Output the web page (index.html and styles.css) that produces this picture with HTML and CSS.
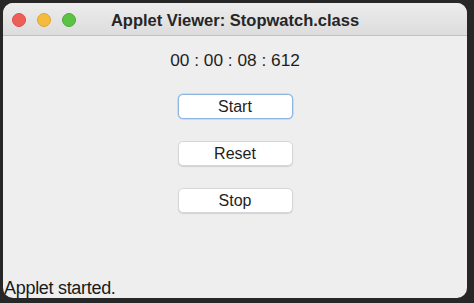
FILE: index.html
```html
<!DOCTYPE html>
<html>
<head>
<meta charset="utf-8">
<link rel="stylesheet" href="styles.css">
</head>
<body>
<div class="window">
  <div class="titlebar">
    <div class="lights">
      <span class="light red"></span>
      <span class="light yellow"></span>
      <span class="light green"></span>
    </div>
    <div class="title">Applet Viewer: Stopwatch.class</div>
  </div>
  <div class="content">
    <div class="time">00 : 00 : 08 : 612</div>
    <div class="buttons">
      <button class="btn focus">Start</button>
      <button class="btn">Reset</button>
      <button class="btn">Stop</button>
    </div>
    <div class="status">Applet started.</div>
  </div>
</div>
</body>
</html>
```
FILE: styles.css
```css
html, body {
  margin: 0;
  padding: 0;
  background: #272727;
  width: 474px;
  height: 303px;
  overflow: hidden;
}
.window {
  margin: 3px 0 0 3px;
  width: 464px;
  height: 295px;
  border-radius: 10px;
  overflow: hidden;
  background: #eeeeee;
  display: flex;
  flex-direction: column;
  font-family: "Liberation Sans", Arial, sans-serif;
}
.titlebar {
  height: 32px;
  flex: none;
  background: linear-gradient(#ececec, #dcdcdc);
  border-bottom: 1px solid #c2c2c2;
  display: flex;
  align-items: center;
  position: relative;
}
.lights {
  display: flex;
  gap: 11px;
  padding-left: 9px;
  padding-top: 1px;
}
.light {
  box-sizing: border-box;
  width: 14px;
  height: 14px;
  border-radius: 50%;
  display: block;
}
.red { background: #ee5e57; border: 0.5px solid #d8504a; }
.yellow { background: #f5bb3c; border: 0.5px solid #dea435; }
.green { background: #5ac343; border: 0.5px solid #4cab39; }
.title {
  position: absolute;
  left: 0;
  right: 0;
  top: 8px;
  text-align: center;
  font-weight: bold;
  font-size: 16.5px;
  color: #262626;
}
.content {
  flex: 1;
  display: flex;
  flex-direction: column;
  align-items: center;
}
.time {
  margin-top: 14px;
  font-size: 17.3px;
  line-height: 20px;
  color: #1e1e1e;
}
.buttons {
  margin-top: 24px;
  display: flex;
  flex-direction: column;
  gap: 22px;
}
.btn {
  width: 115px;
  height: 25px;
  background: #ffffff;
  border: 1px solid #d6d6d6;
  border-radius: 5px;
  box-shadow: 0 1px 1px rgba(0,0,0,0.12);
  font-family: "Liberation Sans", Arial, sans-serif;
  font-size: 16px;
  color: #1e1e1e;
  padding: 0;
}
.btn.focus {
  border: 1.5px solid #8db5e0;
  box-shadow: 0 0 0 0.5px #a9c8ec;
}
.status {
  margin-top: auto;
  align-self: flex-start;
  font-size: 18px;
  letter-spacing: -0.3px;
  line-height: 18px;
  height: 18px;
  margin-bottom: 1px;
  padding-left: 1px;
  color: #1a1a1a;
}
```
